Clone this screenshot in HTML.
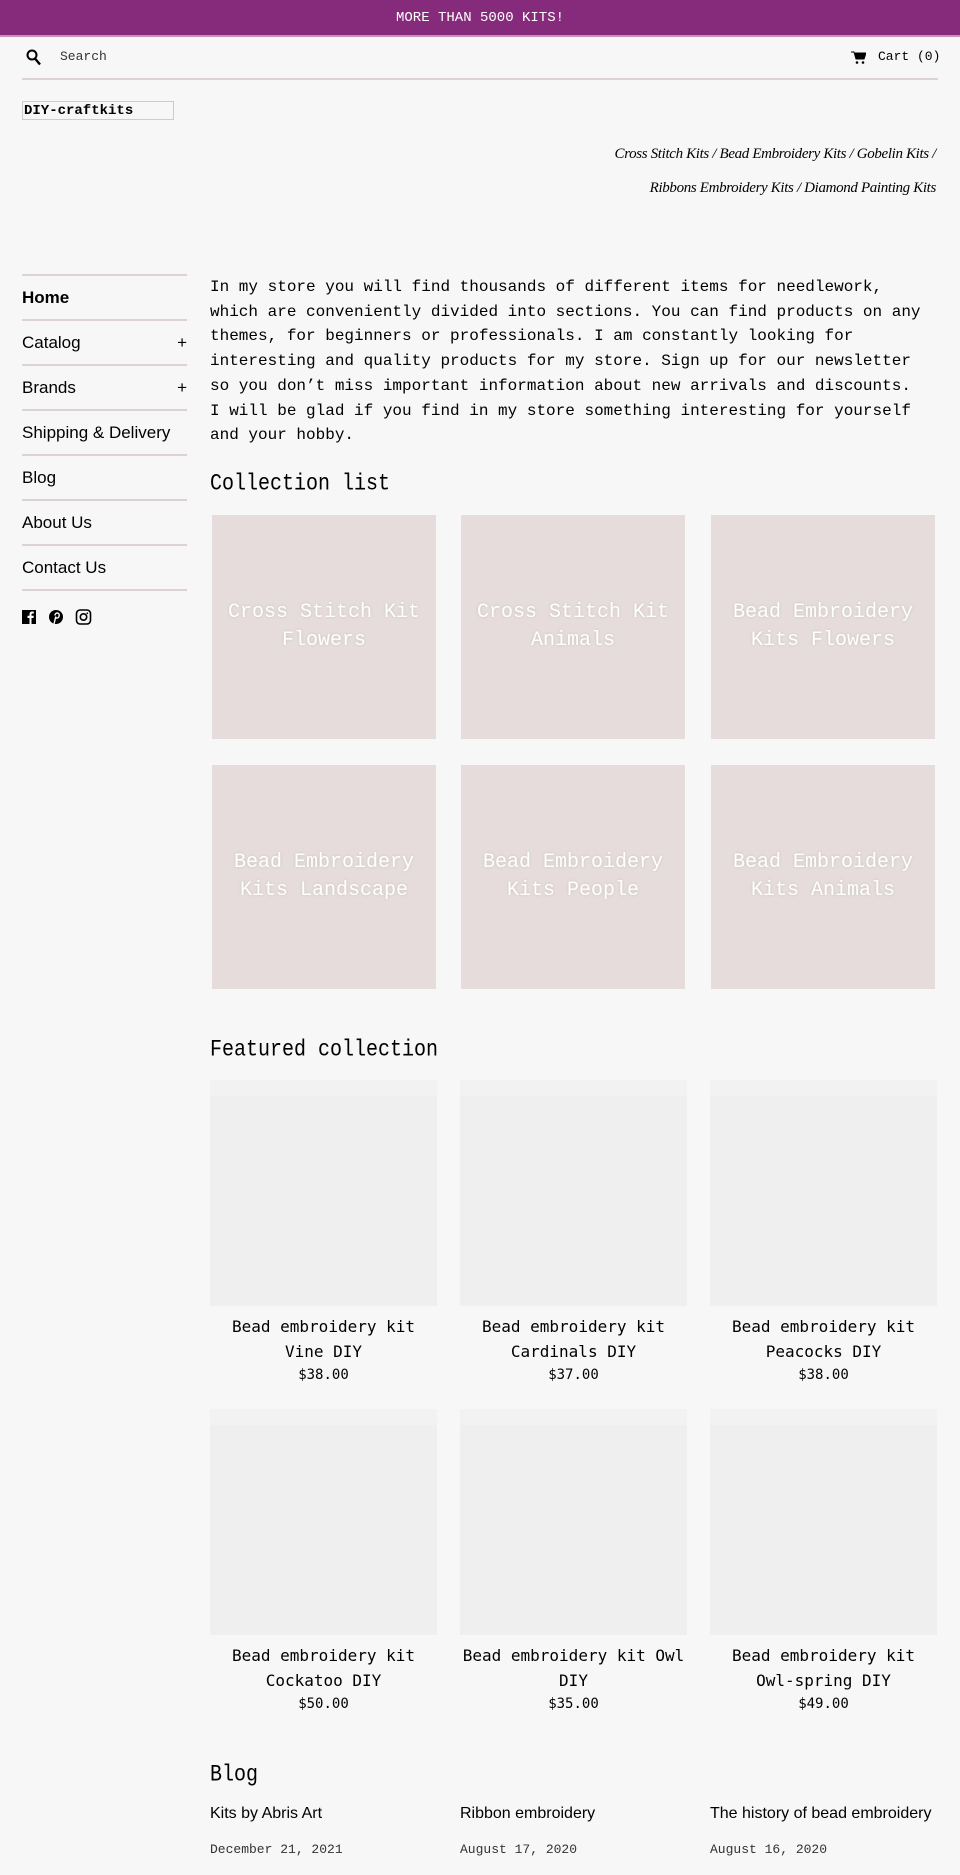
<!DOCTYPE html>
<html><head><meta charset="utf-8"><style>
*{margin:0;padding:0;box-sizing:border-box}
body{width:960px;height:1875px;background:#f7f7f7;color:#000;font-family:"Liberation Mono",monospace;position:relative;overflow:hidden}
.a{position:absolute}
.banner{left:0;top:0;width:960px;height:37px;background:#862a7b;color:#fff;font-size:14px;text-align:center;line-height:37px;border-bottom:2px solid #c890b8}
.hl{height:2px;background:#dcd2d6}
.side{left:22px;width:165px;font-family:"Liberation Sans",sans-serif;font-size:17px}
.item{position:absolute;left:0;width:165px;height:45px;line-height:45px}
.tile{position:absolute;width:224px;height:224px;background:#e5dcdb;color:#fff;font-size:20px;line-height:28px;text-align:center;display:flex;align-items:center;justify-content:center;padding:0 10px;text-shadow:0 0 3px rgba(0,0,0,.12)}
.prod{position:absolute;width:227px;text-align:center;font-family:"DejaVu Sans Mono",monospace}
.prod .img{height:226px;background:#efefef;border-top:16px solid #f2f2f2}
.prod .t{font-size:16px;line-height:25px;margin-top:8px}
.prod .p{font-size:14px;line-height:22px}
h2{font-weight:normal;font-size:20px;position:absolute;left:210px;transform:scaleY(1.15);transform-origin:top left}
.bt{position:absolute;font-family:"Liberation Sans",sans-serif;font-size:16px}
.bd{position:absolute;font-size:13px;color:#333}
</style></head><body>
<div class="a banner">MORE THAN 5000 KITS!</div>
<svg class="a" style="left:26px;top:49px" width="16" height="17" viewBox="0 0 16 17"><circle cx="6" cy="6" r="4.5" fill="none" stroke="#000" stroke-width="2"/><path d="M9 9.5l5 6" stroke="#000" stroke-width="2.4"/></svg>
<div class="a" style="left:60px;top:49px;font-size:13px;color:#333">Search</div>
<svg class="a" style="left:851px;top:51px" width="15" height="13" viewBox="0 0 15 13"><path d="M0 1h3l2 7h8l2-6H4" fill="#000" stroke="#000"/><circle cx="6" cy="11.5" r="1.3"/><circle cx="12" cy="11.5" r="1.3"/></svg>
<div class="a" style="left:878px;top:49px;font-size:13px">Cart (0)</div>
<div class="a hl" style="left:22px;top:78px;width:916px"></div>
<div class="a" style="left:22px;top:101px;width:152px;height:19px;border:1px solid #ccc;font-size:14px;font-weight:bold;line-height:18px;padding-left:1px">DIY-craftkits</div>
<div class="a" style="right:24px;top:137px;font-family:'Liberation Serif',serif;font-style:italic;font-size:15px;text-align:right;line-height:34px;letter-spacing:-.35px">Cross Stitch Kits / Bead Embroidery Kits / Gobelin Kits /<br>Ribbons Embroidery Kits / Diamond Painting Kits</div>
<div class="a side" style="top:274px;height:320px">
<div class="hl a" style="top:0;width:165px"></div>
<div class="item" style="top:1px;font-weight:bold">Home</div>
<div class="hl a" style="top:45px;width:165px"></div>
<div class="item" style="top:46px">Catalog<span style="float:right">+</span></div>
<div class="hl a" style="top:90px;width:165px"></div>
<div class="item" style="top:91px">Brands<span style="float:right">+</span></div>
<div class="hl a" style="top:135px;width:165px"></div>
<div class="item" style="top:136px">Shipping &amp; Delivery</div>
<div class="hl a" style="top:180px;width:165px"></div>
<div class="item" style="top:181px">Blog</div>
<div class="hl a" style="top:225px;width:165px"></div>
<div class="item" style="top:226px">About Us</div>
<div class="hl a" style="top:270px;width:165px"></div>
<div class="item" style="top:271px">Contact Us</div>
<div class="hl a" style="top:315px;width:165px"></div>
</div>
<svg class="a" style="left:22px;top:609px" width="72" height="16" viewBox="0 0 72 16">
<rect x="0" y="1" width="14" height="14" fill="#000"/><path d="M9.5 15V9h2l.3-2.2H9.5V5.5c0-.6.2-1 1-1h1.3V2.6C11.5 2.5 10.9 2.5 10.2 2.5 8.5 2.5 7.5 3.5 7.5 5.3v1.5h-2V9h2v6z" fill="#fff"/>
<circle cx="34" cy="8" r="7" fill="#000"/><path d="M33 6.5c0-1.5 1-2.5 2.2-2.5s2 .9 2 2.1c0 1.7-1 3-2.2 3-.8 0-1.2-.6-1.1-1.1M33.8 7.5L32 15" stroke="#fff" stroke-width="1.4" fill="none"/>
<rect x="54.5" y="1" width="14" height="14" rx="3.5" fill="none" stroke="#000" stroke-width="1.6"/><circle cx="61.5" cy="8" r="3.2" fill="none" stroke="#000" stroke-width="1.6"/><circle cx="65.3" cy="4.3" r=".9"/>
</svg>
<div class="a" style="left:210px;top:275px;width:715px;font-size:16px;line-height:24.7px">In my store you will find thousands of different items for needlework, which are conveniently divided into sections. You can find products on any themes, for beginners or professionals. I am constantly looking for interesting and quality products for my store. Sign up for our newsletter so you don’t miss important information about new arrivals and discounts. I will be glad if you find in my store something interesting for yourself and your hobby.</div>
<h2 style="top:471px">Collection list</h2>
<div class="tile" style="left:212px;top:515px">Cross Stitch Kit Flowers</div>
<div class="tile" style="left:461px;top:515px">Cross Stitch Kit Animals</div>
<div class="tile" style="left:711px;top:515px">Bead Embroidery Kits Flowers</div>
<div class="tile" style="left:212px;top:765px">Bead Embroidery Kits Landscape</div>
<div class="tile" style="left:461px;top:765px">Bead Embroidery Kits People</div>
<div class="tile" style="left:711px;top:765px">Bead Embroidery Kits Animals</div>
<h2 style="top:1037px">Featured collection</h2>
<div class="prod" style="left:210px;top:1080px"><div class="img"></div><div class="t">Bead embroidery kit Vine DIY</div><div class="p">$38.00</div></div>
<div class="prod" style="left:460px;top:1080px"><div class="img"></div><div class="t">Bead embroidery kit Cardinals DIY</div><div class="p">$37.00</div></div>
<div class="prod" style="left:710px;top:1080px"><div class="img"></div><div class="t">Bead embroidery kit Peacocks DIY</div><div class="p">$38.00</div></div>
<div class="prod" style="left:210px;top:1409px"><div class="img"></div><div class="t">Bead embroidery kit Cockatoo DIY</div><div class="p">$50.00</div></div>
<div class="prod" style="left:460px;top:1409px"><div class="img"></div><div class="t">Bead embroidery kit Owl DIY</div><div class="p">$35.00</div></div>
<div class="prod" style="left:710px;top:1409px"><div class="img"></div><div class="t">Bead embroidery kit Owl-spring DIY</div><div class="p">$49.00</div></div>
<h2 style="top:1762px">Blog</h2>
<div class="bt" style="left:210px;top:1805px">Kits by Abris Art</div>
<div class="bt" style="left:460px;top:1805px">Ribbon embroidery</div>
<div class="bt" style="left:710px;top:1805px">The history of bead embroidery</div>
<div class="bd" style="left:210px;top:1842px">December 21, 2021</div>
<div class="bd" style="left:460px;top:1842px">August 17, 2020</div>
<div class="bd" style="left:710px;top:1842px">August 16, 2020</div>
</body></html>
